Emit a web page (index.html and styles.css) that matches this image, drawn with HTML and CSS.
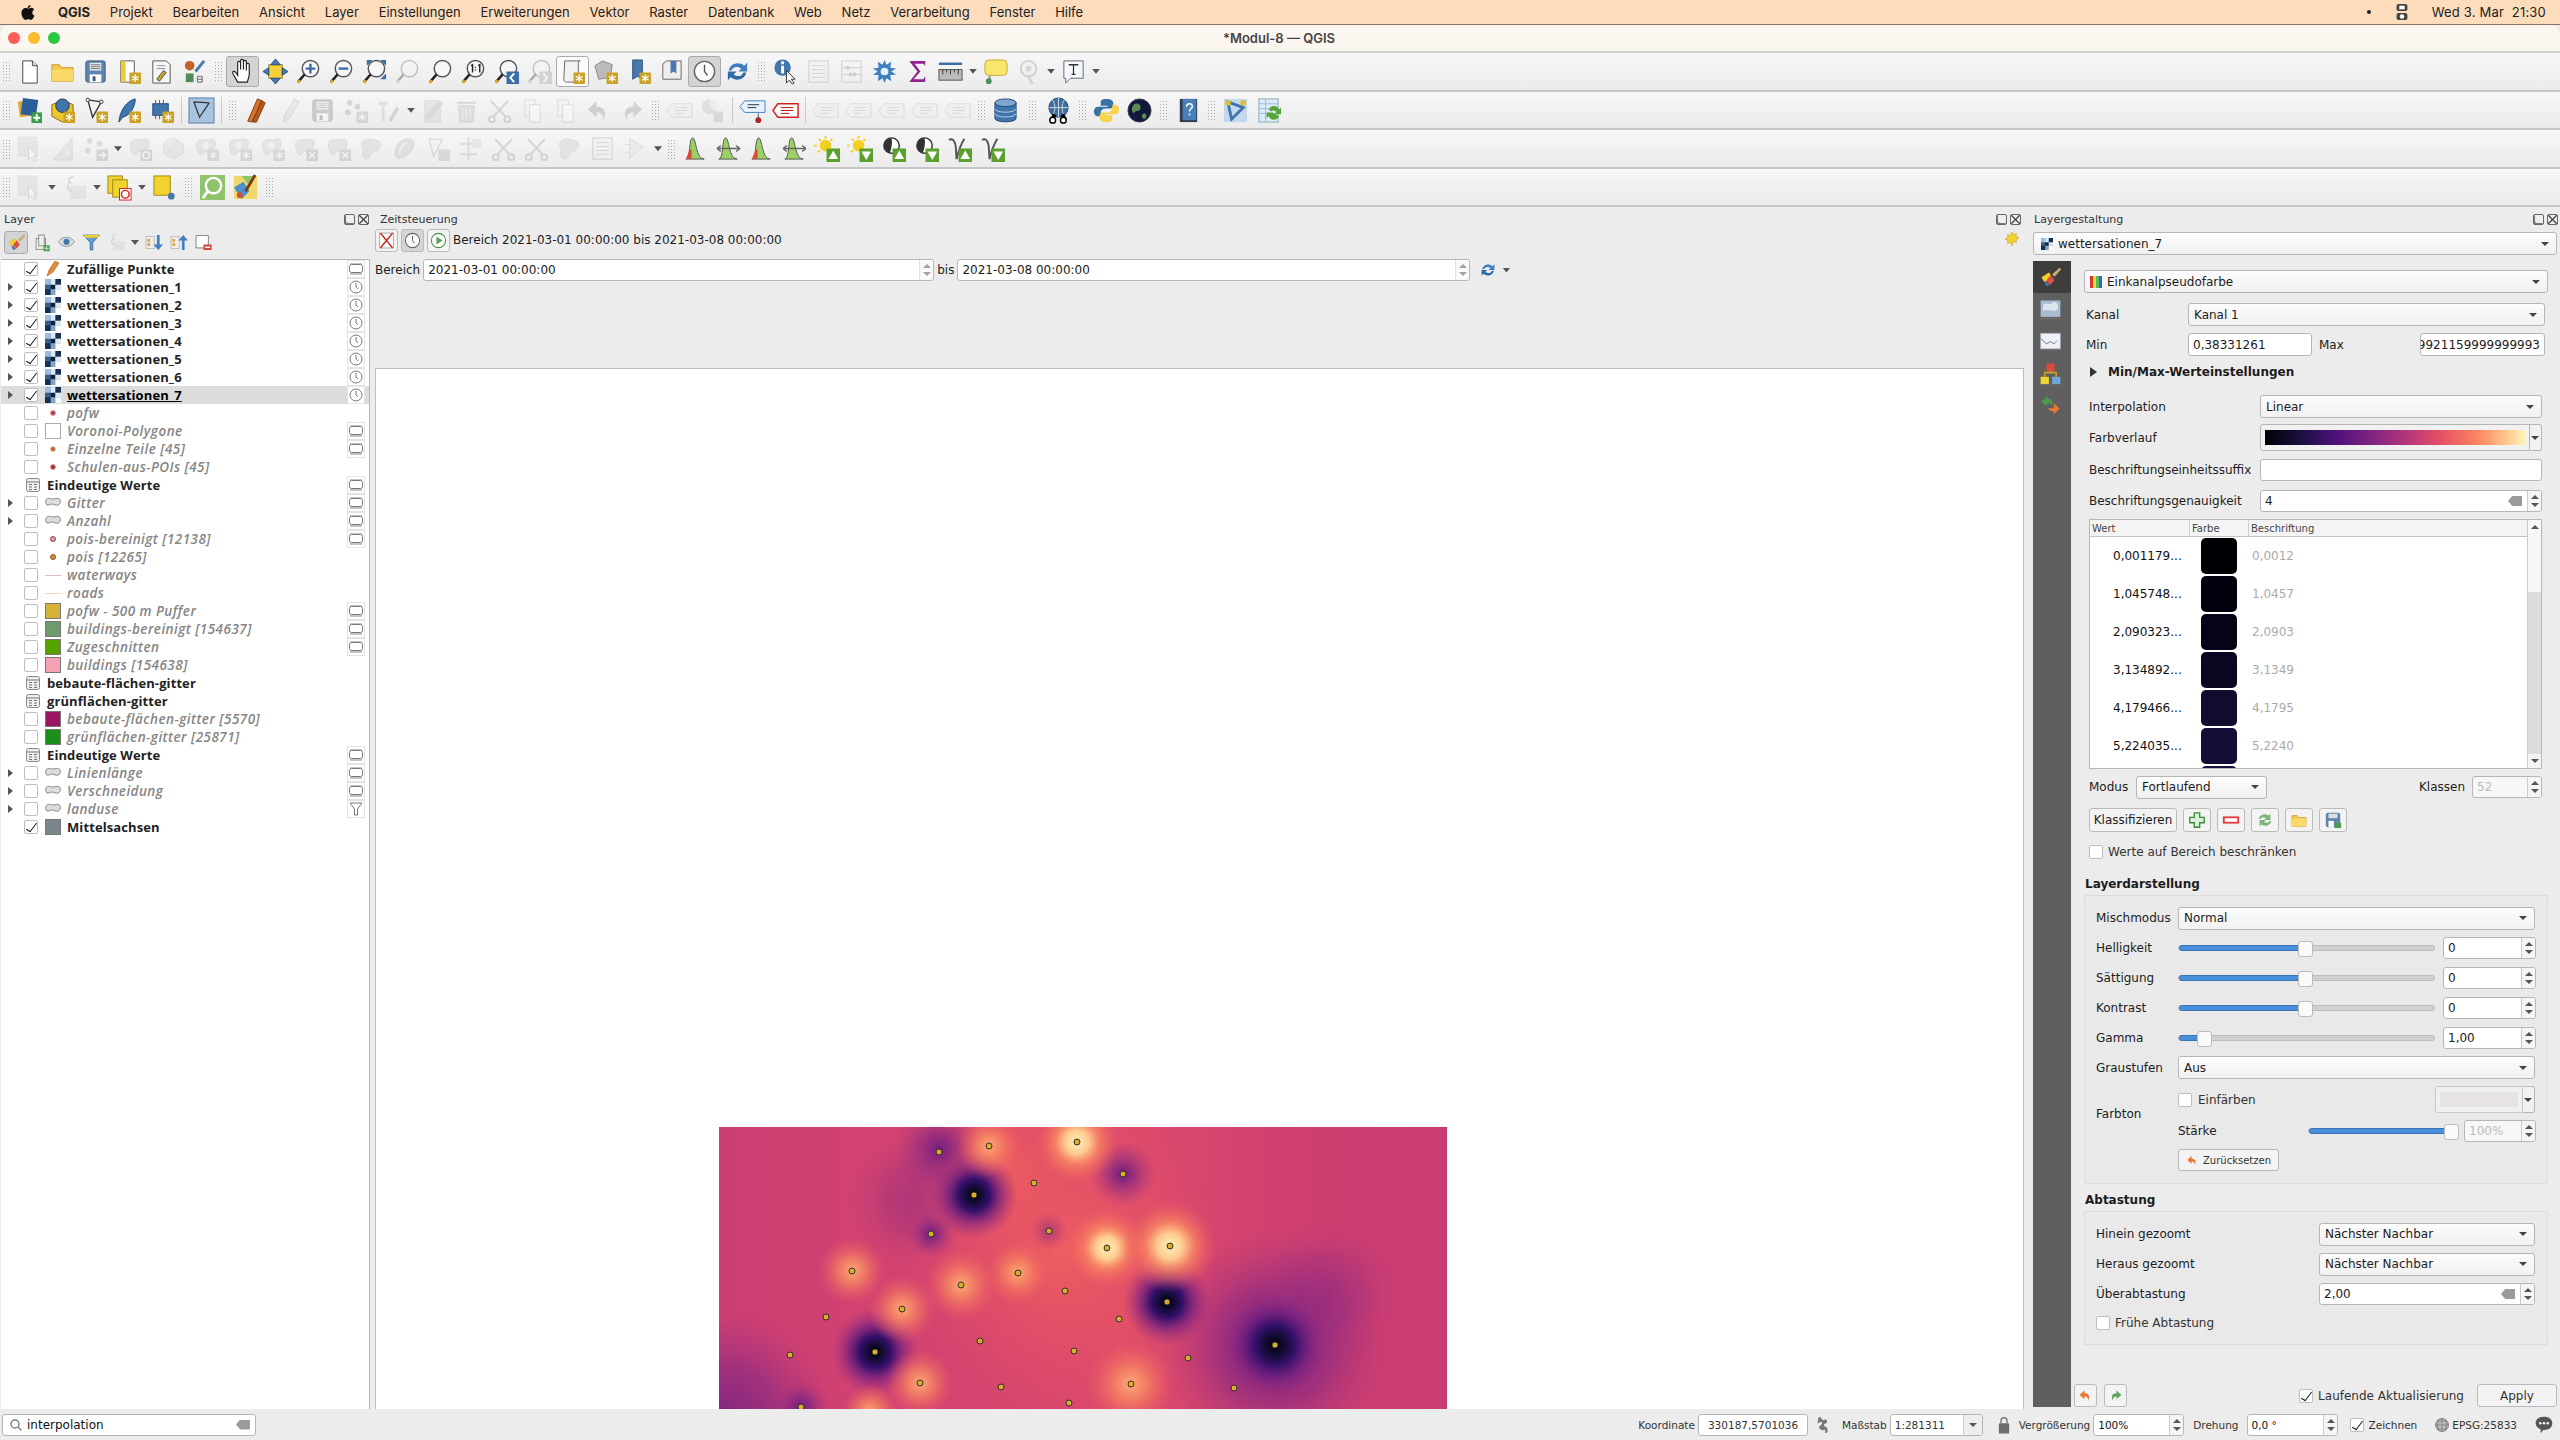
FILE: index.html
```html
<!DOCTYPE html>
<html lang="de">
<head>
  <meta charset="UTF-8" />
  <title>*Modul-8 — QGIS</title>
  <link rel="stylesheet" href="styles.css">
</head>
<body>
  <svg class="defs" width="0" height="0">
    <symbol id="new" viewBox="0 0 28 28"><path d="M7 3h10l5 5v18H7z" fill="#fff" stroke="#444"/><path d="M17 3v5h5" fill="#ddd" stroke="#444"/></symbol>
    <symbol id="folder" viewBox="0 0 28 28"><path d="M3 7h8l2 3h12v14H3z" fill="#f2c94c" stroke="#c79a2b"/><path d="M3 12h22v12H3z" fill="#fbd968"/></symbol>
    <symbol id="save" viewBox="0 0 28 28"><rect x="4" y="3" width="20" height="22" rx="2" fill="#5f84b0" stroke="#38587f"/><rect x="8" y="5" width="12" height="8" fill="#e8e8e8"/><path d="M9 7h10M9 9h10M9 11h10" stroke="#777"/><rect x="8" y="17" width="12" height="8" fill="#fff"/><rect x="11" y="19" width="3" height="5" fill="#38587f"/></symbol>
    <symbol id="star" viewBox="0 0 28 28"><rect x="15" y="15" width="12" height="12" rx="1" fill="#c9a227"/><path d="M21 17v8M17.5 19l7 4M24.5 19l-7 4" stroke="#fff" stroke-width="1.3"/></symbol>
    <symbol id="layout" viewBox="0 0 28 28"><path d="M6 3h14v22H6z" fill="#fff" stroke="#555"/><path d="M6 3h5v22H6z" fill="#f0c83e"/><use href="#star"/></symbol>
    <symbol id="manager" viewBox="0 0 28 28"><path d="M5 3h14l4 4v19H5z" fill="#f6f6f6" stroke="#555"/><path d="M9 8h9M9 11h9" stroke="#88a"/><path d="M9 22l7-9 3 2-7 9z" fill="#c9a227" stroke="#555"/></symbol>
    <symbol id="style" viewBox="0 0 28 28"><circle cx="9" cy="8" r="5" fill="#c4622d"/><path d="M15 14L24 3" stroke="#4a78ad" stroke-width="3"/><rect x="5" y="16" width="8" height="9" fill="#4f8a5a"/><path d="M17 19h5v6h-5zM17 22h5" fill="none" stroke="#666"/></symbol>
    <symbol id="hand" viewBox="0 0 28 28"><path d="M9 25l-5-9c-1-2 1-3 3-1l2 3V5c0-2 3-2 3 0v7V3c0-2 3-2 3 0v9V4c0-2 3-2 3 0v9-6c0-2 3-2 3 0v11l-2 7z" fill="#fff" stroke="#222" stroke-width="1.2"/></symbol>
    <symbol id="pan" viewBox="0 0 28 28"><rect x="7" y="7" width="14" height="14" fill="#f3d23c" stroke="#9a8420"/><path d="M14 1l5 6H9zM14 27l5-6H9zM1 14l6-4v8zM27 14l-6-4v8z" fill="#4a78ad" stroke="#2c5382"/></symbol>
    <symbol id="mag" viewBox="0 0 28 28"><circle cx="16" cy="11" r="8.5" fill="#f4f6f8" stroke="#555" stroke-width="1.5"/><path d="M10 17l-7 8" stroke="#222" stroke-width="2.5"/><path d="M5 23l-2 3" stroke="#e0a91e" stroke-width="3"/></symbol>
    <symbol id="zin" viewBox="0 0 28 28"><use href="#mag"/><path d="M16 6v10M11 11h10" stroke="#3b6ea5" stroke-width="2.5"/></symbol>
    <symbol id="zout" viewBox="0 0 28 28"><use href="#mag"/><path d="M11 11h10" stroke="#3b6ea5" stroke-width="2.5"/></symbol>
    <symbol id="zfull" viewBox="0 0 28 28"><use href="#mag"/><path d="M6 2h6L6 8zM26 2h-6l6 6zM26 22h-6l6-6z" fill="#3b6ea5"/></symbol>
    <symbol id="z11" viewBox="0 0 28 28"><use href="#mag"/><path d="M11.500 8l1.500-1v8M19 8l1.500-1v8M16 9v1M16 12v1" fill="none" stroke="#222" stroke-width="1.500"/></symbol>
    <symbol id="zlast" viewBox="0 0 28 28"><use href="#mag"/><rect x="14" y="14" width="13" height="13" fill="#3b6ea5"/><path d="M22 16l-4 4.5 4 4.5" fill="none" stroke="#fff" stroke-width="2"/></symbol>
    <symbol id="znext" viewBox="0 0 28 28"><use href="#mag"/><rect x="14" y="14" width="13" height="13" fill="#999"/><path d="M18 16l4 4.5-4 4.5" fill="none" stroke="#fff" stroke-width="2"/></symbol>
    <symbol id="map" viewBox="0 0 28 28"><path d="M6 3h16c-2 0-2 2-2 4v18H8c-2 0-3-1-3-3z" fill="#f2f2f2" stroke="#666"/><use href="#star"/></symbol>
    <symbol id="mapstar" viewBox="0 0 28 28"><path d="M3 8l8-5 10 4-2 13-12 2z" fill="#bbb" stroke="#888"/><use href="#star"/></symbol>
    <symbol id="bm" viewBox="0 0 28 28"><path d="M8 2h10v20l-5-3-5 3z" fill="#4a78ad" stroke="#2c5382"/><use href="#star"/></symbol>
    <symbol id="bmshow" viewBox="0 0 28 28"><path d="M5 6l4-3h15v19H5z" fill="#eee" stroke="#666"/><path d="M13 3h6v13l-3-2-3 2z" fill="#4a78ad"/></symbol>
    <symbol id="clock" viewBox="0 0 28 28"><circle cx="14" cy="14" r="10.5" fill="#fbfbfb" stroke="#666" stroke-width="1.5"/><path d="M14 7v7l3 4" fill="none" stroke="#555" stroke-width="1.4"/></symbol>
    <symbol id="refresh" viewBox="0 0 28 28"><path d="M5 13C6 6 15 3 21 8l3-3v9h-9l3-3c-4-3-9-2-10 2z" fill="#3f7fc1"/><path d="M23 15c-1 7-10 10-16 5l-3 3v-9h9l-3 3c4 3 9 2 10-2z" fill="#2f69a8"/></symbol>
    <symbol id="info" viewBox="0 0 28 28"><circle cx="11" cy="10" r="8.5" fill="#3f76ad"/><rect x="9.5" y="8" width="3" height="8" fill="#fff"/><rect x="9.5" y="3.5" width="3" height="3" fill="#fff"/><path d="M15 13v13l3-3 3 4 2-1-3-4h4z" fill="#fff" stroke="#333"/></symbol>
    <symbol id="tbl" viewBox="0 0 28 28"><rect x="4" y="3" width="20" height="22" fill="#f2f2f2" stroke="#888"/><path d="M7 8h14M7 12h14M7 16h14M7 20h14" stroke="#999"/></symbol>
    <symbol id="abacus" viewBox="0 0 28 28"><rect x="4" y="3" width="20" height="22" fill="none" stroke="#888"/><path d="M4 10h20M4 17h20" stroke="#888"/><circle cx="10" cy="10" r="2" fill="#888"/><circle cx="17" cy="17" r="2" fill="#888"/><circle cx="13" cy="17" r="2" fill="#888"/></symbol>
    <symbol id="gear" viewBox="0 0 28 28"><path d="M14 2l2 5 5-3-1 6 6 1-5 3 5 3-6 1 1 6-5-3-2 5-2-5-5 3 1-6-6-1 5-3-5-3 6-1-1-6 5 3z" fill="#3f7fc1"/><circle cx="14" cy="14" r="4" fill="#e8f0f8"/></symbol>
    <symbol id="sigma" viewBox="0 0 28 28"><path d="M6 3h16v5l-2-2H11l6 8-7 8h10l2-3v6H6v-1l8-10-8-10z" fill="#91228f"/></symbol>
    <symbol id="ruler" viewBox="0 0 28 28"><path d="M2 6h24" stroke="#3b6ea5" stroke-width="2.5"/><rect x="2" y="12" width="24" height="11" fill="#bbb" stroke="#555"/><path d="M6 12v5M10 12v3M14 12v5M18 12v3M22 12v5" stroke="#333"/></symbol>
    <symbol id="tip" viewBox="0 0 28 28"><rect x="3" y="2" width="23" height="16" rx="4" fill="#f9e66e" stroke="#c6ad32"/><path d="M8 18v4" stroke="#999" stroke-width="2"/><circle cx="7" cy="24" r="3" fill="#4f8a5a"/></symbol>
    <symbol id="eyemag" viewBox="0 0 28 28"><circle cx="14" cy="11" r="8" fill="#eee" stroke="#888" stroke-width="2"/><circle cx="14" cy="11" r="3" fill="#999"/><path d="M14 19l4 8" stroke="#999" stroke-width="3"/></symbol>
    <symbol id="texta" viewBox="0 0 28 28"><path d="M4 3h20v18H11l-5 5v-5H4z" fill="#f5f8fc" stroke="#667"/><path d="M9 7h10M14 7v10M12 17h4" fill="none" stroke="#333" stroke-width="1.300"/></symbol>
    <symbol id="dsm" viewBox="0 0 28 28"><rect x="3" y="4" width="15" height="16" fill="#e0a52e" transform="rotate(-8 10 12)"/><rect x="6" y="2" width="16" height="17" fill="#2b5d99" transform="rotate(8 14 10)"/><rect x="16" y="16" width="11" height="11" fill="#3f9a4d"/><path d="M21.5 18v7M18 21.500h7" stroke="#fff" stroke-width="2"/></symbol>
    <symbol id="newgeo" viewBox="0 0 28 28"><path d="M3 8l11-5 11 5v12l-11 6-11-6z" fill="#eec62e" stroke="#7b6a12"/><circle cx="14" cy="9" r="7" fill="#3f76ad" stroke="#234"/><use href="#star"/></symbol>
    <symbol id="newv" viewBox="0 0 28 28"><path d="M6 3l5 18L20 5M6 3l14 2" fill="none" stroke="#333" stroke-width="1.4"/><circle cx="6" cy="3" r="1.8" fill="#fff" stroke="#333"/><circle cx="20" cy="5" r="1.8" fill="#fff" stroke="#333"/><use href="#star"/></symbol>
    <symbol id="quill" viewBox="0 0 28 28"><path d="M4 26C5 14 12 4 21 2c0 8-5 17-13 19z" fill="#3f76ad" stroke="#1f4a78"/><use href="#star"/></symbol>
    <symbol id="mem" viewBox="0 0 28 28"><rect x="5" y="7" width="16" height="12" fill="#3f76ad" stroke="#1f4a78"/><path d="M8 3v4M12 3v4M16 3v4M8 19v4M12 19v4M16 19v4" stroke="#555"/><use href="#star"/></symbol>
    <symbol id="virt" viewBox="0 0 28 28"><rect x="1" y="1" width="26" height="26" fill="#a8c4e0" stroke="#5a7ca0"/><path d="M6 5l6 16L22 6M6 5l16 1" fill="none" stroke="#333" stroke-width="1.3"/></symbol>
    <symbol id="pencils" viewBox="0 0 28 28"><path d="M5 25L15 2l5 2-11 22z" fill="#d8742a" stroke="#7c3c12"/><path d="M10 26L19 4l4 2-9 20z" fill="#b65a1e" stroke="#7c3c12"/></symbol>
    <symbol id="pencil" viewBox="0 0 28 28"><path d="M8 26l1-7L19 2l5 3-10 17z" fill="#d4d4d4" stroke="#999"/></symbol>
    <symbol id="nodes" viewBox="0 0 28 28"><circle cx="8" cy="6" r="3" fill="#999"/><circle cx="16" cy="10" r="3" fill="#999"/><circle cx="6" cy="16" r="3" fill="#999"/><use href="#star"/></symbol>
    <symbol id="tools" viewBox="0 0 28 28"><path d="M4 5h9v3l-3 1v16H7V9L4 8z" fill="#bbb"/><path d="M14 24l8-14 3 2-8 14z" fill="#999"/></symbol>
    <symbol id="form" viewBox="0 0 28 28"><path d="M5 4h16v22H5z" fill="#ccc" stroke="#aaa"/><path d="M4 20L20 4l4 3L9 24z" fill="#aaa"/></symbol>
    <symbol id="trash" viewBox="0 0 28 28"><path d="M6 9h16l-1 17H7z" fill="#bbb" stroke="#999"/><path d="M4 6h20" stroke="#999" stroke-width="2"/><path d="M10 12v11M14 12v11M18 12v11" stroke="#eee"/></symbol>
    <symbol id="cut" viewBox="0 0 28 28"><path d="M5 4l16 17M23 4L7 21" stroke="#999" stroke-width="2"/><circle cx="6" cy="23" r="3" fill="none" stroke="#999" stroke-width="2"/><circle cx="22" cy="23" r="3" fill="none" stroke="#999" stroke-width="2"/></symbol>
    <symbol id="copy" viewBox="0 0 28 28"><path d="M6 3h11v17H6z" fill="#f4f4f4" stroke="#aaa"/><path d="M11 8h11v18H11z" fill="#fff" stroke="#aaa"/></symbol>
    <symbol id="undo" viewBox="0 0 28 28"><path d="M12 4L3 13l9 8v-5c5 0 7 2 7 8 4-9 1-14-7-14z" fill="#e8792f"/></symbol>
    <symbol id="redo" viewBox="0 0 28 28"><path d="M16 4l9 9-9 8v-5c-5 0-7 2-7 8-4-9-1-14 7-14z" fill="#5fa463"/></symbol>
    <symbol id="abc" viewBox="0 0 28 28"><path d="M1 14l5-7h21v14H6z" fill="#eee" stroke="#aaa"/><path d="M9 11h13M9 14h13M9 17h9" stroke="#aaa"/></symbol>
    <symbol id="pie" viewBox="0 0 28 28"><circle cx="11" cy="10" r="8" fill="#b8b8b8"/><path d="M11 10V2a8 8 0 0 1 6 13z" fill="#ddd"/><rect x="15" y="15" width="10" height="11" fill="#aaa"/></symbol>
    <symbol id="abcblue" viewBox="0 0 28 28"><path d="M1 10l5-6h21v12H6z" fill="#e8f2fb" stroke="#3f7fc1"/><path d="M9 8h12M9 11h9" stroke="#234"/><path d="M20 17v5" stroke="#555"/><circle cx="20" cy="24" r="3" fill="#a82525"/></symbol>
    <symbol id="abcred" viewBox="0 0 28 28"><path d="M1 14l5-7h21v14H6z" fill="#fff" stroke="#d42020" stroke-width="1.5"/><path d="M9 11h13M9 14h13M9 17h9" stroke="#c01010"/></symbol>
    <symbol id="db" viewBox="0 0 28 28"><path d="M3 6v16c0 5 22 5 22 0V6z" fill="#3f76ad" stroke="#234d78"/><ellipse cx="14" cy="6" rx="11" ry="4" fill="#7ea6cf" stroke="#234d78"/><path d="M3 12c0 5 22 5 22 0M3 17c0 5 22 5 22 0" fill="none" stroke="#bcd"/></symbol>
    <symbol id="globeb" viewBox="0 0 28 28"><circle cx="14" cy="11" r="10" fill="#3f6ea3" stroke="#234d78"/><path d="M4 11h20M14 1v20M8 3c3 5 3 11 0 16M20 3c-3 5-3 11 0 16" stroke="#cdd" fill="none"/><path d="M10 18l-3 6M18 18l3 6" stroke="#000" stroke-width="4"/><circle cx="8" cy="24" r="3" fill="#fff" stroke="#000" stroke-width="1.5"/><circle cx="19" cy="24" r="3" fill="#fff" stroke="#000" stroke-width="1.5"/></symbol>
    <symbol id="python" viewBox="0 0 28 28"><path d="M14 2c-6 0-6 2-6 4v3h7v1H5c-3 0-4 3-4 5s1 5 4 5h3v-3c0-3 2-5 5-5h5c2 0 3-2 3-3V6c0-2-2-4-7-4z" fill="#3873a6"/><path d="M14 26c6 0 6-2 6-4v-3h-7v-1h10c3 0 4-3 4-5s-1-5-4-5h-3v3c0 3-2 5-5 5h-5c-2 0-3 2-3 3v3c0 2 2 4 7 4z" fill="#f7d24b"/></symbol>
    <symbol id="earth" viewBox="0 0 28 28"><circle cx="14" cy="14" r="12" fill="#10183c" stroke="#445"/><path d="M8 8c4-3 8 0 7 4s-5 1-7 5c-3-3-2-7 0-9zM17 18c3-2 5 0 4 3s-6 2-4-3z" fill="#5e8a52"/></symbol>
    <symbol id="help" viewBox="0 0 28 28"><rect x="6" y="2" width="18" height="24" fill="#2f3e52"/><rect x="9" y="2" width="14" height="22" fill="#4b7fb8"/><path d="M13 10c0-4 6-4 6 0 0 2-3 2-3 5M16 17v2" fill="none" stroke="#fff" stroke-width="1.500"/></symbol>
    <symbol id="plug" viewBox="0 0 28 28"><rect x="2" y="2" width="24" height="24" fill="#c4d8ec"/><path d="M6 5l16 6-12 12z" fill="none" stroke="#3f76ad" stroke-width="3"/><circle cx="22" cy="6" r="3" fill="#e0c02e"/><circle cx="6" cy="6" r="3" fill="#e0c02e"/></symbol>
    <symbol id="sync" viewBox="0 0 28 28"><rect x="4" y="2" width="20" height="24" fill="#dcebf7" stroke="#8ab"/><path d="M4 7h20M4 12h20M4 17h20M11 2v24" stroke="#9bd"/><path d="M14 13a6 6 0 0 1 11 0l2-2v7h-7l2-2a3 3 0 0 0-5-1zM25 20a6 6 0 0 1-11 0l-2 2v-6h6z" fill="#58a638"/></symbol>
    <symbol id="hist" viewBox="0 0 28 28"><path d="M4 25C9 25 7 3 11 3s3 22 12 22z" fill="#9bd160" stroke="#555"/><path d="M4 25h6V15H8z" fill="#d94c3b"/></symbol>
    <symbol id="histc" viewBox="0 0 28 28"><path d="M4 25C9 25 7 3 11 3s3 22 12 22z" fill="#9bd160" stroke="#555"/><path d="M2 14h24M2 14l4-3M2 14l4 3M26 14l-4-3M26 14l-4 3" stroke="#666" stroke-width="1.4" fill="none"/></symbol>
    <symbol id="sun" viewBox="0 0 28 28"><circle cx="12" cy="11" r="6" fill="#f2d01e"/><path d="M12 1v3M3 11H0M5 4l2 2M19 4l-2 2M4 18l2-2" stroke="#f2d01e" stroke-width="2"/></symbol>
    <symbol id="contrast" viewBox="0 0 28 28"><circle cx="12" cy="11" r="8" fill="#fff" stroke="#333" stroke-width="1.5"/><path d="M12 3a8 8 0 0 0-8 8c0 4 3 7 6 8 2-5 3-11 2-16z" fill="#333"/></symbol>
    <symbol id="gamma" viewBox="0 0 28 28"><path d="M3 5c4-2 6 1 7 6l1 14M19 4c-3 5-6 12-8 21" fill="none" stroke="#555" stroke-width="2"/></symbol>
    <symbol id="upb" viewBox="0 0 28 28"><rect x="13" y="14" width="14" height="14" fill="#5ba02f"/><path d="M20 16l5 9H15z" fill="#fff"/></symbol>
    <symbol id="downb" viewBox="0 0 28 28"><rect x="13" y="14" width="14" height="14" fill="#5ba02f"/><path d="M20 26l5-9H15z" fill="#fff"/></symbol>
    <symbol id="select" viewBox="0 0 28 28"><rect x="2" y="2" width="20" height="20" fill="#ccc" stroke="#aaa" stroke-dasharray="2 2"/><path d="M13 12v14l3-3 3 4 2-1-3-4h4z" fill="#fff" stroke="#999"/></symbol>
    <symbol id="expr" viewBox="0 0 28 28"><rect x="9" y="12" width="17" height="14" fill="#ccc"/><path d="M13 3c-5 0-7 4-3 6-5 1-4 9 2 8" fill="none" stroke="#aaa" stroke-width="2"/></symbol>
    <symbol id="desel" viewBox="0 0 28 28"><rect x="2" y="2" width="15" height="18" fill="#f1d22e" stroke="#a08a10"/><rect x="7" y="6" width="15" height="18" fill="#f1d22e" stroke="#a08a10"/><rect x="14" y="15" width="12" height="12" fill="#fff" stroke="#d42020"/><circle cx="20" cy="21" r="4" fill="none" stroke="#d42020" stroke-width="1.5"/></symbol>
    <symbol id="yellowpin" viewBox="0 0 28 28"><rect x="3" y="2" width="17" height="20" fill="#f1d22e" stroke="#a08a10"/><circle cx="21" cy="23" r="3.500" fill="#4a78ad"/></symbol>
    <symbol id="greenmag" viewBox="0 0 28 28"><rect x="1" y="1" width="26" height="26" fill="#8fc46b"/><circle cx="15" cy="12" r="8" fill="none" stroke="#fff" stroke-width="2.500"/><path d="M9 18l-5 7" stroke="#fff" stroke-width="3"/></symbol>
    <symbol id="mapstyle" viewBox="0 0 28 28"><rect x="2" y="2" width="24" height="24" fill="#f2d86a"/><path d="M2 14l10-6 6 10-8 8z" fill="#4a8fd0"/><path d="M10 2l6 8 4-3 2-5z" fill="#8fc46b"/><path d="M14 18L24 1" stroke="#7c3c12" stroke-width="3"/><circle cx="8" cy="22" r="3" fill="#d94c3b"/></symbol>
    <symbol id="setsq" viewBox="0 0 28 28"><path d="M4 26L24 3v23z" fill="#ccc" stroke="#aaa"/><path d="M16 21l4-5v5z" fill="#eee"/></symbol>
    <symbol id="ptarrow" viewBox="0 0 28 28"><circle cx="8" cy="6" r="3" fill="#aaa"/><circle cx="18" cy="9" r="3" fill="#aaa"/><circle cx="6" cy="16" r="3" fill="#aaa"/><rect x="15" y="15" width="12" height="12" fill="#999"/><path d="M17 21h7M21 18l3 3-3 3" fill="none" stroke="#fff" stroke-width="1.500"/></symbol>
    <symbol id="blobr" viewBox="0 0 28 28"><path d="M4 8c3-5 8-2 11-3s8-2 8 3-2 7-5 8-5 0-7 3-5 2-6-2-2-6-1-9z" fill="#c8c8c8" stroke="#aaa"/><rect x="14" y="15" width="12" height="12" fill="#999"/><circle cx="20" cy="21" r="3.500" fill="none" stroke="#fff" stroke-width="1.500"/></symbol>
    <symbol id="blobs" viewBox="0 0 28 28"><path d="M4 8c3-5 8-2 11-3s8-2 8 3-2 7-5 8-5 0-7 3-5 2-6-2-2-6-1-9z" fill="#c8c8c8" stroke="#aaa"/><circle cx="13" cy="11" r="3.500" fill="#eee"/><use href="#star"/></symbol>
    <symbol id="blobx" viewBox="0 0 28 28"><path d="M4 8c3-5 8-2 11-3s8-2 8 3-2 7-5 8-5 0-7 3-5 2-6-2-2-6-1-9z" fill="#c8c8c8" stroke="#aaa"/><rect x="15" y="15" width="12" height="12" fill="#999"/><path d="M18 18l6 6M24 18l-6 6" stroke="#fff" stroke-width="1.500"/></symbol>
    <symbol id="blobp" viewBox="0 0 28 28"><path d="M4 8c3-5 9-4 13-3s8 2 6 7-5 5-8 6-1 7-6 7-4-5-4-9-2-5-1-8z" fill="#c4c4c4" stroke="#aaa"/></symbol>
    <symbol id="hexa" viewBox="0 0 28 28"><path d="M14 3l10 6v10l-10 6-10-6V9z" fill="#ccc" stroke="#aaa"/><path d="M9 3c4 0 6 3 4 7s-7 2-7-2 1-5 3-5z" fill="#ddd"/></symbol>
    <symbol id="leaf" viewBox="0 0 28 28"><path d="M5 22c-3-6 3-17 12-18s8 9 3 14-12 9-15 4z" fill="#bbb" stroke="#999"/><path d="M9 20c-1-5 3-11 8-12" fill="none" stroke="#e6e6e6" stroke-width="2"/></symbol>
    <symbol id="vsplit" viewBox="0 0 28 28"><path d="M5 4l5 18 9-17M5 4l14 1" fill="none" stroke="#aaa" stroke-width="1.500"/><rect x="15" y="15" width="12" height="12" fill="#aaa"/></symbol>
    <symbol id="vcut" viewBox="0 0 28 28"><path d="M12 2v24M3 9h18M3 20h18" stroke="#aaa" stroke-width="2" fill="none"/><rect x="16" y="4" width="9" height="9" fill="#ccc"/></symbol>
    <symbol id="vecrot" viewBox="0 0 28 28"><path d="M8 4l14 8-14 12z" fill="#ddd" stroke="#aaa"/><path d="M8 10h-5M8 18H3" stroke="#aaa"/></symbol>

    <symbol id="chip" viewBox="0 0 16 16"><rect x="1.500" y="3.500" width="13" height="8" rx="2" fill="#fff" stroke="#777"/><path d="M3 12v2M5 12v2M7 12v2M9 12v2M11 12v2M13 12v2M3 2v1.500M5 2v1.500M7 2v1.500M9 2v1.500M11 2v1.500M13 2v1.500" stroke="#888"/></symbol>
    <symbol id="clk" viewBox="0 0 16 16"><circle cx="8" cy="8" r="6" fill="#fff" stroke="#777"/><path d="M8 4v4l2 2" fill="none" stroke="#777"/></symbol>
    <symbol id="filt" viewBox="0 0 16 16"><path d="M2 2h12L9.500 8v6h-3V8z" fill="#fff" stroke="#777"/></symbol>
    <symbol id="ras" viewBox="0 0 14 14"><rect width="14" height="14" fill="#3a5f8f"/><rect x="0" y="0" width="5" height="5" fill="#9dbde0"/><rect x="9" y="0" width="5" height="5" fill="#17304f"/><rect x="5" y="5" width="4" height="4" fill="#0e2038"/><rect x="5" y="0" width="4" height="5" fill="#dde8f3"/><rect x="9" y="5" width="5" height="4" fill="#dde8f3"/><rect x="0" y="9" width="5" height="5" fill="#17304f"/><rect x="5" y="9" width="4" height="5" fill="#7fa3c9"/><rect x="9" y="9" width="5" height="5" fill="#fff"/></symbol>
    <symbol id="blob" viewBox="0 0 16 14"><path d="M1 4c2-3 5-1 7-1s6-2 7 1 0 4-2 5-4-1-6-1-4 2-5 1-2-3-1-5z" fill="#ddd" stroke="#888"/></symbol>
    <symbol id="grp" viewBox="0 0 14 14"><rect x=".5" y=".5" width="13" height="13" rx="2" fill="#eee" stroke="#888"/><path d="M1 4h12M3 6.500h3M8 6.500h3M3 9h3M8 9h3M3 11.500h3M8 11.500h3" stroke="#777"/></symbol>
    <symbol id="pen" viewBox="0 0 16 16"><path d="M2 15l2-6L10 0l4 2-6 9z" fill="#e08b3a" stroke="#a85f1a" stroke-width=".6"/></symbol>
    <symbol id="ramp" viewBox="0 0 12 12"><rect width="3" height="12" fill="#d33"/><rect x="3" width="3" height="12" fill="#ed3"/><rect x="6" width="3" height="12" fill="#5b5"/><rect x="9" width="3" height="12" fill="#36c"/></symbol>
    <symbol id="brush" viewBox="0 0 28 28"><path d="M3 14l9-6 7 9-5 6z" fill="#d9513f"/><path d="M7 20l-4-6 9-6 2 3z" fill="#f1d22e"/><path d="M6 18l8 5-5 2z" fill="#3f76ad"/><path d="M16 10l9-8 2 2-8 9z" fill="#c9ae6a"/></symbol>
    <symbol id="eye" viewBox="0 0 28 28"><path d="M2 13c6-9 18-9 24 0-6 9-18 9-24 0z" fill="#ddd" stroke="#777"/><circle cx="14" cy="13" r="4.500" fill="#3f76ad"/></symbol>
    <symbol id="funnel" viewBox="0 0 28 28"><path d="M2 3h24L16 14v11h-4V14z" fill="#5ea0d8" stroke="#2c5382"/><path d="M2 3h24l-3 4H5z" fill="#f1d22e"/></symbol>
    <symbol id="addgrp" viewBox="0 0 28 28"><rect x="6" y="8" width="14" height="16" fill="#eee" stroke="#666"/><rect x="10" y="3" width="8" height="16" fill="#eee" stroke="#666"/><rect x="17" y="18" width="9" height="9" fill="#4e9a4e"/><path d="M21.500 19v7M18 22.500h7" stroke="#fff"/></symbol>
    <symbol id="exp" viewBox="0 0 28 28"><rect x="3" y="5" width="12" height="18" fill="#eee" stroke="#aaa"/><rect x="5" y="9" width="4" height="4" fill="#e0a52e"/><rect x="5" y="15" width="4" height="4" fill="#e0a52e"/><path d="M19 3v14h-5l7 8 7-8h-5V3z" fill="#3f7fc1"/></symbol>
    <symbol id="col" viewBox="0 0 28 28"><rect x="3" y="5" width="12" height="18" fill="#eee" stroke="#aaa"/><rect x="5" y="9" width="4" height="4" fill="#e0a52e"/><rect x="5" y="15" width="4" height="4" fill="#e0a52e"/><path d="M19 25V11h-5l7-8 7 8h-5v14z" fill="#3f7fc1"/></symbol>
    <symbol id="rem" viewBox="0 0 28 28"><rect x="3" y="4" width="18" height="18" fill="#fff" stroke="#555"/><rect x="14" y="17" width="12" height="8" fill="#d94040"/><rect x="16" y="20" width="8" height="2" fill="#fff"/></symbol>
    <symbol id="cross" viewBox="0 0 28 28"><rect x="4" y="3" width="20" height="22" fill="#fff" stroke="#888"/><path d="M5 3l18 22M23 3L5 25" stroke="#d42020" stroke-width="2"/></symbol>
    <symbol id="play" viewBox="0 0 28 28"><circle cx="14" cy="14" r="10.500" fill="#fff" stroke="#4d8a4d" stroke-width="1.500"/><path d="M11 8l9 6-9 6z" fill="#5ba05b"/></symbol>
    <symbol id="plus" viewBox="0 0 20 20"><path d="M7 2h6v5h5v6h-5v5H7v-5H2V7h5z" fill="#d9efd9" stroke="#3d8a3d" stroke-width="1.500"/></symbol>
    <symbol id="minus" viewBox="0 0 20 20"><rect x="2" y="7" width="16" height="6" fill="#fff" stroke="#e03c3c" stroke-width="2"/></symbol>
    <symbol id="grcy" viewBox="0 0 20 20"><path d="M3 9c1-5 7-7 11-4l2-2v7h-7l2-2c-3-2-5-1-6 1zM17 11c-1 5-7 7-11 4l-2 2v-7h7l-2 2c3 2 5 1 6-1z" fill="#7ab87a"/></symbol>
    <symbol id="saveg" viewBox="0 0 20 20"><rect x="2" y="2" width="16" height="16" rx="2" fill="#5f84b0"/><rect x="5" y="3" width="10" height="5" fill="#ddd"/><rect x="5" y="11" width="6" height="7" fill="#fff"/><rect x="12" y="13" width="7" height="6" fill="#4e9a4e"/></symbol>
    <symbol id="greyglobe" viewBox="0 0 20 20"><circle cx="10" cy="10" r="8" fill="#bbb" stroke="#666"/><path d="M2 10h16M10 2v16M4 5h12M4 15h12M6 3c-2 5-2 9 0 14M14 3c2 5 2 9 0 14" fill="none" stroke="#666" stroke-width=".7"/></symbol>
    <symbol id="msg" viewBox="0 0 24 24"><path d="M12 2c6 0 10 3 10 8s-4 8-10 8h-1l-3 4v-5C4 16 2 13 2 10c0-5 4-8 10-8z" fill="#555"/><circle cx="7.500" cy="10" r="1.500" fill="#fff"/><circle cx="12" cy="10" r="1.500" fill="#fff"/><circle cx="16.500" cy="10" r="1.500" fill="#fff"/></symbol>
    <symbol id="lock" viewBox="0 0 14 22"><rect x="1" y="9" width="12" height="12" rx="1" fill="#6e6e6e"/><path d="M3.500 9V6a3.500 3.500 0 0 1 7 0v3" fill="none" stroke="#777" stroke-width="1.600"/></symbol>
    <symbol id="apple" viewBox="0 0 16 18"><path d="M11 1c0 2-2 4-3.500 3.500C7.500 3 9 1 11 1zM8 5c1 0 2-1 4-1 1 0 2.500.5 3 2-3 2-2.500 6 .5 7-1 2.500-2.500 5-4 5-1 0-1.500-.7-3-.7s-2 .7-3 .7C3 18 .5 13.500.5 10 .5 6.500 3 4.500 5 4.500 6.500 4.500 7.200 5 8 5z" fill="#111"/></symbol>
    <symbol id="ctrl" viewBox="0 0 14 20"><rect x="1" y="1" width="12" height="8" rx="2" fill="#444"/><rect x="4" y="3" width="6" height="4" fill="#fff"/><rect x="1" y="11" width="12" height="8" rx="2" fill="#444"/><circle cx="7" cy="15" r="2.500" fill="#fff"/></symbol>
    <symbol id="plugmini" viewBox="0 0 16 20"><path d="M5 2c-4 1 0 3-3 6 2 1 5-3 5 0s-5 3-2 6 4-1 5 1-1 3 1 3 2-3 1-5-3-1-3-3 3-1 3-3-1-3-3-2-3-3-4-3z" fill="#777"/></symbol>
    <symbol id="sumgear" viewBox="0 0 16 16"><path d="M8 1l1.500 2.500 3-1-.5 3 3 1.500-3 1.500.5 3-3-1L8 15l-1.500-3.500-3 1 .5-3L1 8l3-1.500-.5-3 3 1z" fill="#f1d22e" stroke="#c9a227" stroke-width=".6"/></symbol>
    <symbol id="netw" viewBox="0 0 28 28"><rect x="2" y="3" width="24" height="20" fill="#a8bcd2"/><path d="M5 8c4-3 8 1 11-2s6 0 7 2v6c-6 4-14-2-18 2z" fill="#dce6ef"/><path d="M2 25h24" stroke="#777" stroke-dasharray="2 1" stroke-width="2"/></symbol>
    <symbol id="histo" viewBox="0 0 28 28"><rect x="2" y="4" width="24" height="19" fill="#eef1f5" stroke="#aab"/><path d="M2 10l7 7 5-3 4 3 4-4" fill="none" stroke="#567"/></symbol>
    <symbol id="tree" viewBox="0 0 28 28"><rect x="9" y="2" width="10" height="9" fill="#d94c3b"/><rect x="2" y="18" width="10" height="9" fill="#f1d22e"/><rect x="16" y="18" width="10" height="9" fill="#6ea6da"/><path d="M7 18v-5h14v5M14 11v2" fill="none" stroke="#c9a227" stroke-width="2"/></symbol>
    <symbol id="undored" viewBox="0 0 28 28"><path d="M11 2L3 9l7 6v-4c4 0 6 1 6 4 2-6 0-9-6-9z" fill="#4e9a4e"/><path d="M18 11l7 7-7 7v-4c-4 0-6-1-7-4 4 1 5 0 7 0z" fill="#e8792f"/></symbol>
  </svg>

  <header class="menubar">
    <svg class="apple"><use href="#apple"/></svg>
    <span class="menu app">QGIS</span><span class="menu">Projekt</span><span class="menu">Bearbeiten</span><span class="menu">Ansicht</span><span class="menu">Layer</span><span class="menu">Einstellungen</span><span class="menu">Erweiterungen</span><span class="menu">Vektor</span><span class="menu">Raster</span><span class="menu">Datenbank</span><span class="menu">Web</span><span class="menu">Netz</span><span class="menu">Verarbeitung</span><span class="menu">Fenster</span><span class="menu">Hilfe</span>
    <span class="menu-right">
      <span class="dot"></span>
      <svg class="ctrl"><use href="#ctrl"/></svg>
      <span class="clock">Wed 3. Mar&nbsp; 21:30</span>
    </span>
  </header>

  <div class="titlebar">
    <span class="light red"></span><span class="light amber"></span><span class="light green"></span>
    <span class="title">*Modul-8 — QGIS</span>
  </div>

  <div class="toolbar">
    <span class="grip"></span>
    <span class="tb"><svg><use href="#new"/></svg></span><span class="tb"><svg><use href="#folder"/></svg></span><span class="tb"><svg><use href="#save"/></svg></span><span class="tb"><svg><use href="#layout"/></svg></span><span class="tb"><svg><use href="#manager"/></svg></span><span class="tb"><svg><use href="#style"/></svg></span>
    <span class="grip"></span>
    <span class="tb on"><svg><use href="#hand"/></svg></span><span class="tb"><svg><use href="#pan"/></svg></span><span class="tb"><svg><use href="#zin"/></svg></span><span class="tb"><svg><use href="#zout"/></svg></span><span class="tb"><svg><use href="#zfull"/></svg></span><span class="tb off"><svg><use href="#mag"/></svg></span><span class="tb"><svg><use href="#mag"/></svg></span><span class="tb"><svg><use href="#z11"/></svg></span><span class="tb"><svg><use href="#zlast"/></svg></span><span class="tb off"><svg><use href="#znext"/></svg></span><span class="tb ring"><svg><use href="#map"/></svg></span><span class="tb"><svg><use href="#mapstar"/></svg></span><span class="tb"><svg><use href="#bm"/></svg></span><span class="tb"><svg><use href="#bmshow"/></svg></span><span class="tb on"><svg><use href="#clock"/></svg></span><span class="tb"><svg><use href="#refresh"/></svg></span>
    <span class="grip"></span>
    <span class="tb"><svg><use href="#info"/></svg></span><span class="tb off"><svg><use href="#tbl"/></svg></span><span class="tb off"><svg><use href="#abacus"/></svg></span><span class="tb"><svg><use href="#gear"/></svg></span><span class="tb"><svg><use href="#sigma"/></svg></span><span class="tb"><svg><use href="#ruler"/></svg></span><span class="arr"></span><span class="tb"><svg><use href="#tip"/></svg></span><span class="tb off"><svg><use href="#eyemag"/></svg></span><span class="arr"></span><span class="tb"><svg><use href="#texta"/></svg></span><span class="arr"></span>
  </div>

  <div class="toolbar">
    <span class="grip"></span>
    <span class="tb"><svg><use href="#dsm"/></svg></span><span class="tb"><svg><use href="#newgeo"/></svg></span><span class="tb"><svg><use href="#newv"/></svg></span><span class="tb"><svg><use href="#quill"/></svg></span><span class="tb"><svg><use href="#mem"/></svg></span><span class="sep"></span><span class="tb"><svg><use href="#virt"/></svg></span><span class="sep"></span>
    <span class="grip"></span>
    <span class="tb"><svg><use href="#pencils"/></svg></span><span class="tb off"><svg><use href="#pencil"/></svg></span><span class="tb off"><svg><use href="#save"/></svg></span><span class="tb off"><svg><use href="#nodes"/></svg></span><span class="tb off"><svg><use href="#tools"/></svg></span><span class="arr"></span><span class="tb off"><svg><use href="#form"/></svg></span><span class="tb off"><svg><use href="#trash"/></svg></span><span class="tb off"><svg><use href="#cut"/></svg></span><span class="tb off"><svg><use href="#copy"/></svg></span><span class="tb off"><svg><use href="#copy"/></svg></span><span class="tb off"><svg><use href="#undo"/></svg></span><span class="tb off"><svg><use href="#redo"/></svg></span>
    <span class="grip"></span>
    <span class="tb off"><svg><use href="#abc"/></svg></span><span class="tb off"><svg><use href="#pie"/></svg></span><span class="sep"></span><span class="tb"><svg><use href="#abcblue"/></svg></span><span class="tb"><svg><use href="#abcred"/></svg></span><span class="sep"></span><span class="tb off"><svg><use href="#abc"/></svg></span><span class="tb off"><svg><use href="#abc"/></svg></span><span class="tb off"><svg><use href="#abc"/></svg></span><span class="tb off"><svg><use href="#abc"/></svg></span><span class="tb off"><svg><use href="#abc"/></svg></span>
    <span class="grip"></span>
    <span class="tb"><svg><use href="#db"/></svg></span>
    <span class="grip wide"></span>
    <span class="tb"><svg><use href="#globeb"/></svg></span>
    <span class="grip"></span>
    <span class="tb"><svg><use href="#python"/></svg></span><span class="tb"><svg><use href="#earth"/></svg></span>
    <span class="grip"></span>
    <span class="tb"><svg><use href="#help"/></svg></span>
    <span class="grip"></span>
    <span class="tb"><svg><use href="#plug"/></svg></span><span class="tb"><svg><use href="#sync"/></svg></span>
  </div>

  <div class="toolbar">
    <span class="grip"></span>
    <span class="tb off"><svg><use href="#select"/></svg></span><span class="tb off"><svg><use href="#setsq"/></svg></span><span class="tb off"><svg><use href="#ptarrow"/></svg></span><span class="arr"></span><span class="tb off"><svg><use href="#blobr"/></svg></span><span class="tb off"><svg><use href="#hexa"/></svg></span><span class="tb off"><svg><use href="#blobs"/></svg></span><span class="tb off"><svg><use href="#blobs"/></svg></span><span class="tb off"><svg><use href="#blobs"/></svg></span><span class="tb off"><svg><use href="#blobx"/></svg></span><span class="tb off"><svg><use href="#blobx"/></svg></span><span class="tb off"><svg><use href="#blobp"/></svg></span><span class="tb off"><svg><use href="#leaf"/></svg></span><span class="tb off"><svg><use href="#vsplit"/></svg></span><span class="tb off"><svg><use href="#vcut"/></svg></span><span class="tb off"><svg><use href="#cut"/></svg></span><span class="tb off"><svg><use href="#cut"/></svg></span><span class="tb off"><svg><use href="#blobp"/></svg></span><span class="tb off"><svg><use href="#tbl"/></svg></span><span class="tb off"><svg><use href="#vecrot"/></svg></span><span class="arr"></span>
    <span class="grip"></span>
    <span class="tb"><svg><use href="#hist"/></svg></span><span class="tb"><svg><use href="#histc"/></svg></span><span class="tb"><svg><use href="#hist"/></svg></span><span class="tb"><svg><use href="#histc"/></svg></span><span class="tb"><svg><use href="#sun"/><use href="#upb"/></svg></span><span class="tb"><svg><use href="#sun"/><use href="#downb"/></svg></span><span class="tb"><svg><use href="#contrast"/><use href="#upb"/></svg></span><span class="tb"><svg><use href="#contrast"/><use href="#downb"/></svg></span><span class="tb"><svg><use href="#gamma"/><use href="#upb"/></svg></span><span class="tb"><svg><use href="#gamma"/><use href="#downb"/></svg></span>
  </div>

  <div class="toolbar">
    <span class="grip"></span>
    <span class="tb off"><svg><use href="#select"/></svg></span><span class="arr"></span><span class="tb off"><svg><use href="#expr"/></svg></span><span class="arr"></span><span class="tb"><svg><use href="#desel"/></svg></span><span class="arr"></span><span class="tb"><svg><use href="#yellowpin"/></svg></span>
    <span class="grip"></span>
    <span class="tb"><svg><use href="#greenmag"/></svg></span><span class="tb"><svg><use href="#mapstyle"/></svg></span>
    <span class="grip"></span>
  </div>

  <main class="workspace">
    <section class="layers">
      <div class="dock-title"><span>Layer</span><span class="dock-btns"><i class="db-float"></i><i class="db-close"></i></span></div>
      <div class="layer-tools">
        <span class="lt on"><svg><use href="#brush"/></svg></span><span class="lt"><svg><use href="#addgrp"/></svg></span><span class="lt"><svg><use href="#eye"/></svg></span><span class="lt"><svg><use href="#funnel"/></svg></span><span class="lt off"><svg><use href="#expr"/></svg></span><span class="arr small"></span><span class="lt"><svg><use href="#exp"/></svg></span><span class="lt"><svg><use href="#col"/></svg></span><span class="lt"><svg><use href="#rem"/></svg></span>
      </div>
      <div class="tree">
        <div class="row"><b class="tw"></b><i class="cb on"></i><svg class="sym"><use href="#pen"/></svg><span class="nm strong">Zufällige Punkte</span><svg class="ind"><use href="#chip"/></svg></div>
        <div class="row"><b class="tw c"></b><i class="cb on"></i><svg class="sym"><use href="#ras"/></svg><span class="nm strong">wettersationen_1</span><svg class="ind"><use href="#clk"/></svg></div>
        <div class="row"><b class="tw c"></b><i class="cb on"></i><svg class="sym"><use href="#ras"/></svg><span class="nm strong">wettersationen_2</span><svg class="ind"><use href="#clk"/></svg></div>
        <div class="row"><b class="tw c"></b><i class="cb on"></i><svg class="sym"><use href="#ras"/></svg><span class="nm strong">wettersationen_3</span><svg class="ind"><use href="#clk"/></svg></div>
        <div class="row"><b class="tw c"></b><i class="cb on"></i><svg class="sym"><use href="#ras"/></svg><span class="nm strong">wettersationen_4</span><svg class="ind"><use href="#clk"/></svg></div>
        <div class="row"><b class="tw c"></b><i class="cb on"></i><svg class="sym"><use href="#ras"/></svg><span class="nm strong">wettersationen_5</span><svg class="ind"><use href="#clk"/></svg></div>
        <div class="row"><b class="tw c"></b><i class="cb on"></i><svg class="sym"><use href="#ras"/></svg><span class="nm strong">wettersationen_6</span><svg class="ind"><use href="#clk"/></svg></div>
        <div class="row sel"><b class="tw c"></b><i class="cb on"></i><svg class="sym"><use href="#ras"/></svg><span class="nm strong cur">wettersationen_7</span><svg class="ind"><use href="#clk"/></svg></div>
        <div class="row"><b class="tw"></b><i class="cb"></i><span class="sym"><i class="pt pt-a"></i></span><span class="nm">pofw</span></div>
        <div class="row"><b class="tw"></b><i class="cb"></i><span class="sym"><i class="fill f-none"></i></span><span class="nm">Voronoi-Polygone</span><svg class="ind"><use href="#chip"/></svg></div>
        <div class="row"><b class="tw"></b><i class="cb"></i><span class="sym"><i class="pt pt-b"></i></span><span class="nm">Einzelne Teile [45]</span><svg class="ind"><use href="#chip"/></svg></div>
        <div class="row"><b class="tw"></b><i class="cb"></i><span class="sym"><i class="pt pt-c"></i></span><span class="nm">Schulen-aus-POIs [45]</span></div>
        <div class="row"><b class="tw"></b><svg class="grp"><use href="#grp"/></svg><span class="nm strong">Eindeutige Werte</span><svg class="ind"><use href="#chip"/></svg></div>
        <div class="row"><b class="tw c"></b><i class="cb"></i><svg class="sym"><use href="#blob"/></svg><span class="nm">Gitter</span><svg class="ind"><use href="#chip"/></svg></div>
        <div class="row"><b class="tw c"></b><i class="cb"></i><svg class="sym"><use href="#blob"/></svg><span class="nm">Anzahl</span><svg class="ind"><use href="#chip"/></svg></div>
        <div class="row"><b class="tw"></b><i class="cb"></i><span class="sym"><i class="pt pt-d"></i></span><span class="nm">pois-bereinigt [12138]</span><svg class="ind"><use href="#chip"/></svg></div>
        <div class="row"><b class="tw"></b><i class="cb"></i><span class="sym"><i class="pt pt-e"></i></span><span class="nm">pois [12265]</span></div>
        <div class="row"><b class="tw"></b><i class="cb"></i><span class="sym"><i class="ln ln-a"></i></span><span class="nm">waterways</span></div>
        <div class="row"><b class="tw"></b><i class="cb"></i><span class="sym"><i class="ln ln-b"></i></span><span class="nm">roads</span></div>
        <div class="row"><b class="tw"></b><i class="cb"></i><span class="sym"><i class="fill f-gold"></i></span><span class="nm">pofw - 500 m Puffer</span><svg class="ind"><use href="#chip"/></svg></div>
        <div class="row"><b class="tw"></b><i class="cb"></i><span class="sym"><i class="fill f-sage"></i></span><span class="nm">buildings-bereinigt [154637]</span><svg class="ind"><use href="#chip"/></svg></div>
        <div class="row"><b class="tw"></b><i class="cb"></i><span class="sym"><i class="fill f-green"></i></span><span class="nm">Zugeschnitten</span><svg class="ind"><use href="#chip"/></svg></div>
        <div class="row"><b class="tw"></b><i class="cb"></i><span class="sym"><i class="fill f-pink"></i></span><span class="nm">buildings [154638]</span></div>
        <div class="row"><b class="tw"></b><svg class="grp"><use href="#grp"/></svg><span class="nm strong">bebaute-flächen-gitter</span></div>
        <div class="row"><b class="tw"></b><svg class="grp"><use href="#grp"/></svg><span class="nm strong">grünflächen-gitter</span></div>
        <div class="row"><b class="tw"></b><i class="cb"></i><span class="sym"><i class="fill f-plum"></i></span><span class="nm">bebaute-flächen-gitter [5570]</span></div>
        <div class="row"><b class="tw"></b><i class="cb"></i><span class="sym"><i class="fill f-leaf"></i></span><span class="nm">grünflächen-gitter [25871]</span></div>
        <div class="row"><b class="tw"></b><svg class="grp"><use href="#grp"/></svg><span class="nm strong">Eindeutige Werte</span><svg class="ind"><use href="#chip"/></svg></div>
        <div class="row"><b class="tw c"></b><i class="cb"></i><svg class="sym"><use href="#blob"/></svg><span class="nm">Linienlänge</span><svg class="ind"><use href="#chip"/></svg></div>
        <div class="row"><b class="tw c"></b><i class="cb"></i><svg class="sym"><use href="#blob"/></svg><span class="nm">Verschneidung</span><svg class="ind"><use href="#chip"/></svg></div>
        <div class="row"><b class="tw c"></b><i class="cb"></i><svg class="sym"><use href="#blob"/></svg><span class="nm">landuse</span><svg class="ind"><use href="#filt"/></svg></div>
        <div class="row"><b class="tw"></b><i class="cb on"></i><span class="sym"><i class="fill f-slate"></i></span><span class="nm strong">Mittelsachsen</span></div>
      </div>
    </section>

    <section class="center">
      <div class="dock-title time-title"><span>Zeitsteuerung</span><span class="dock-btns"><i class="db-float"></i><i class="db-close"></i></span></div>
      <div class="time-row">
        <span class="tc"><svg><use href="#cross"/></svg></span><span class="tc on"><svg><use href="#clock"/></svg></span><span class="tc"><svg><use href="#play"/></svg></span>
        <span class="time-text">Bereich 2021-03-01 00:00:00 bis 2021-03-08 00:00:00</span>
        <svg class="time-gear"><use href="#sumgear"/></svg>
      </div>
      <div class="range-row">
        <span>Bereich</span>
        <span class="field range"><span class="val">2021-03-01 00:00:00</span><i class="spin faint"></i></span>
        <span>bis</span>
        <span class="field range two"><span class="val">2021-03-08 00:00:00</span><i class="spin faint"></i></span>
        <svg class="range-sync"><use href="#refresh"/></svg><span class="arr small"></span>
      </div>
      <div class="canvas">
        <svg class="raster" viewBox="719 1127 728 282" width="728" height="282">
          <defs>
            <linearGradient id="base"><stop offset="0" stop-color="#cc3f73"/><stop offset=".35" stop-color="#d4446f"/><stop offset=".55" stop-color="#dd4b6b"/><stop offset=".78" stop-color="#cf4070"/><stop offset="1" stop-color="#c93c73"/></linearGradient>
            <radialGradient id="warm"><stop offset="0" stop-color="#f1605f" stop-opacity=".9"/><stop offset="1" stop-color="#e65164" stop-opacity="0"/></radialGradient>
            <radialGradient id="wide"><stop offset="0" stop-color="#7b2382"/><stop offset=".5" stop-color="#8f2a80" stop-opacity=".7"/><stop offset="1" stop-color="#b63679" stop-opacity="0"/></radialGradient>
            <radialGradient id="dark"><stop offset="0" stop-color="#000004"/><stop offset=".16" stop-color="#110b30"/><stop offset=".36" stop-color="#34106a"/><stop offset=".62" stop-color="#6d1d80" stop-opacity=".65"/><stop offset="1" stop-color="#9c2e7f" stop-opacity="0"/></radialGradient>
            <radialGradient id="purp"><stop offset="0" stop-color="#6a1c80"/><stop offset=".5" stop-color="#8c2981" stop-opacity=".55"/><stop offset="1" stop-color="#b63679" stop-opacity="0"/></radialGradient>
            <radialGradient id="lite"><stop offset="0" stop-color="#fef2bd"/><stop offset=".28" stop-color="#fecb8f"/><stop offset=".55" stop-color="#fb8b61" stop-opacity=".7"/><stop offset="1" stop-color="#f1605f" stop-opacity="0"/></radialGradient>
            <radialGradient id="oran"><stop offset="0" stop-color="#feab78"/><stop offset=".4" stop-color="#f98a60" stop-opacity=".7"/><stop offset="1" stop-color="#f1605f" stop-opacity="0"/></radialGradient>
          </defs>
          <rect x="719" y="1127" width="728" height="282" fill="url(#base)"/>
          <circle cx="1060" cy="1250" r="160" fill="url(#warm)"/>
          <circle cx="1000" cy="1170" r="100" fill="url(#warm)"/>
          <circle cx="720" cy="1425" r="120" fill="url(#wide)"/>
          <circle cx="1275" cy="1345" r="115" fill="url(#wide)"/>
          <circle cx="1330" cy="1290" r="70" fill="url(#wide)" opacity=".4"/>
          <circle cx="939" cy="1150" r="46" fill="url(#purp)"/>
          <circle cx="915" cy="1200" r="65" fill="url(#wide)" opacity=".45"/>
          <circle cx="1123" cy="1174" r="34" fill="url(#purp)"/>
          <circle cx="931" cy="1234" r="24" fill="url(#purp)"/>
          <circle cx="1049" cy="1231" r="20" fill="url(#purp)" opacity=".5"/>
          <circle cx="801" cy="1407" r="28" fill="url(#purp)"/>
          <circle cx="974" cy="1195" r="44" fill="url(#dark)"/>
          <circle cx="1167" cy="1302" r="44" fill="url(#dark)"/>
          <circle cx="1275" cy="1345" r="56" fill="url(#dark)"/>
          <circle cx="875" cy="1352" r="44" fill="url(#dark)"/>
          <circle cx="1077" cy="1142" r="42" fill="url(#lite)"/>
          <circle cx="1107" cy="1248" r="40" fill="url(#lite)"/>
          <circle cx="1170" cy="1246" r="46" fill="url(#lite)"/>
          <circle cx="1131" cy="1384" r="44" fill="url(#oran)"/>
          <circle cx="989" cy="1146" r="32" fill="url(#oran)"/>
          <circle cx="852" cy="1271" r="34" fill="url(#oran)"/>
          <circle cx="1018" cy="1273" r="32" fill="url(#oran)"/>
          <circle cx="961" cy="1285" r="36" fill="url(#oran)"/>
          <circle cx="902" cy="1309" r="34" fill="url(#oran)"/>
          <circle cx="920" cy="1383" r="34" fill="url(#oran)"/>
          <circle cx="870" cy="1412" r="28" fill="url(#oran)"/>
          <g class="stations">
            <circle cx="939" cy="1152" r="3"/><circle cx="989" cy="1146" r="3"/><circle cx="1077" cy="1142" r="3"/><circle cx="1123" cy="1174" r="3"/><circle cx="1034" cy="1183" r="3"/><circle cx="974" cy="1195" r="3"/><circle cx="931" cy="1234" r="3"/><circle cx="1049" cy="1231" r="3"/><circle cx="1107" cy="1248" r="3"/><circle cx="1170" cy="1246" r="3"/><circle cx="852" cy="1271" r="3"/><circle cx="1018" cy="1273" r="3"/><circle cx="961" cy="1285" r="3"/><circle cx="1065" cy="1291" r="3"/><circle cx="1167" cy="1302" r="3"/><circle cx="902" cy="1309" r="3"/><circle cx="826" cy="1317" r="3"/><circle cx="1119" cy="1319" r="3"/><circle cx="1275" cy="1345" r="3"/><circle cx="980" cy="1341" r="3"/><circle cx="1074" cy="1351" r="3"/><circle cx="875" cy="1352" r="3"/><circle cx="790" cy="1355" r="3"/><circle cx="1188" cy="1358" r="3"/><circle cx="920" cy="1383" r="3"/><circle cx="1001" cy="1387" r="3"/><circle cx="1131" cy="1384" r="3"/><circle cx="1234" cy="1388" r="3"/><circle cx="1069" cy="1403" r="3"/><circle cx="801" cy="1407" r="3"/>
          </g>
        </svg>
      </div>
    </section>

    <section class="styling">
      <div class="dock-title"><span>Layergestaltung</span><span class="dock-btns"><i class="db-float"></i><i class="db-close"></i></span></div>
      <div class="combo layer-combo"><svg class="mini"><use href="#ras"/></svg>wettersationen_7</div>
      <div class="style-body">
        <nav class="nav">
          <span class="nav-item cur"><svg><use href="#brush"/></svg></span>
          <span class="nav-item"><svg><use href="#netw"/></svg></span>
          <span class="nav-item"><svg><use href="#histo"/></svg></span>
          <span class="nav-item"><svg><use href="#tree"/></svg></span>
          <span class="nav-item"><svg><use href="#undored"/></svg></span>
        </nav>
        <div class="page">
          <div class="combo renderer"><svg class="mini"><use href="#ramp"/></svg>Einkanalpseudofarbe</div>

          <div class="f kanal"><label class="w102">Kanal</label><div class="combo grow">Kanal 1</div></div>
          <div class="f minrow"><label class="w102">Min</label><span class="field minf"><span class="val">0,38331261</span></span><label class="maxl">Max</label><span class="field maxf"><span class="val right">9921159999999993</span></span></div>
          <div class="minmax"><i class="tri"></i><b>Min/Max-Werteinstellungen</b></div>

          <div class="inner">
            <div class="f interp"><label class="w171">Interpolation</label><div class="combo grow">Linear</div></div>
            <div class="f ramp-row"><label class="w171">Farbverlauf</label><div class="ramp"><i></i></div><span class="ramp-drop"></span></div>
            <div class="f suffix"><label class="w171">Beschriftungseinheitssuffix</label><span class="field grow"></span></div>
            <div class="f genau"><label class="w171">Beschriftungsgenauigkeit</label><span class="field grow"><span class="val">4</span><i class="clr"></i><i class="spin"></i></span></div>

            <div class="classes">
              <div class="cls-head"><span class="h1">Wert</span><span class="h2">Farbe</span><span class="h3">Beschriftung</span><span class="h4"></span></div>
              <div class="cls-body">
                <div class="cls-rows">
                  <div class="cls"><span class="v">0,001179...</span><i class="sw s1"></i><span class="l">0,0012</span></div>
                  <div class="cls"><span class="v">1,045748...</span><i class="sw s2"></i><span class="l">1,0457</span></div>
                  <div class="cls"><span class="v">2,090323...</span><i class="sw s3"></i><span class="l">2,0903</span></div>
                  <div class="cls"><span class="v">3,134892...</span><i class="sw s4"></i><span class="l">3,1349</span></div>
                  <div class="cls"><span class="v">4,179466...</span><i class="sw s5"></i><span class="l">4,1795</span></div>
                  <div class="cls"><span class="v">5,224035...</span><i class="sw s6"></i><span class="l">5,2240</span></div>
                  <div class="cls"><span class="v"></span><i class="sw s7"></i><span class="l"></span></div>
                </div>
                <div class="vscroll"><i class="vdown"></i></div>
              </div>
            </div>

            <div class="f modus"><label class="modl">Modus</label><div class="combo modc">Fortlaufend</div><label class="kl">Klassen</label><span class="field klf dis"><span class="val">52</span><i class="spin"></i></span></div>
            <div class="f btns"><span class="btn kbtn">Klassifizieren</span><span class="btn ib"><svg><use href="#plus"/></svg></span><span class="btn ib"><svg><use href="#minus"/></svg></span><span class="btn ib"><svg><use href="#grcy"/></svg></span><span class="btn ib"><svg><use href="#folder"/></svg></span><span class="btn ib"><svg><use href="#saveg"/></svg></span></div>
            <div class="f chk werte"><i class="cb"></i><span>Werte auf Bereich beschränken</span></div>
          </div>

          <h4 class="sec first">Layerdarstellung</h4>
          <div class="grpbox gb1">
            <div class="f h24"><label class="w83">Mischmodus</label><div class="combo grow">Normal</div></div>
            <div class="f h22 m7"><label class="w83">Helligkeit</label><div class="slider"><i class="pos50"></i></div><span class="field sp"><span class="val">0</span><i class="spin"></i></span></div>
            <div class="f h22 m8"><label class="w83">Sättigung</label><div class="slider"><i class="pos50"></i></div><span class="field sp"><span class="val">0</span><i class="spin"></i></span></div>
            <div class="f h22 m8"><label class="w83">Kontrast</label><div class="slider"><i class="pos50"></i></div><span class="field sp"><span class="val">0</span><i class="spin"></i></span></div>
            <div class="f h22 m8"><label class="w83">Gamma</label><div class="slider"><i class="pos11"></i></div><span class="field sp"><span class="val">1,00</span><i class="spin"></i></span></div>
            <div class="f h23 m7"><label class="w83">Graustufen</label><div class="combo grow">Aus</div></div>
            <div class="f farbton">
              <label class="w83 hue-label">Farbton</label>
              <div class="hue">
                <div class="f h27"><i class="cb"></i><span class="hue-l">Einfärben</span><div class="huesw"><i></i></div><span class="ramp-drop hued"></span></div>
                <div class="f h22 m7"><label class="st">Stärke</label><div class="slider short"><i class="pos100"></i></div><span class="field sp2 dis"><span class="val">100%</span><i class="spin"></i></span></div>
                <span class="btn reset"><svg><use href="#undo"/></svg>Zurücksetzen</span>
              </div>
            </div>
          </div>

          <h4 class="sec">Abtastung</h4>
          <div class="grpbox gb2">
            <div class="f h24"><label class="w224">Hinein gezoomt</label><div class="combo grow">Nächster Nachbar</div></div>
            <div class="f h24 m6"><label class="w224">Heraus gezoomt</label><div class="combo grow">Nächster Nachbar</div></div>
            <div class="f h22 m7"><label class="w224">Überabtastung</label><span class="field grow"><span class="val">2,00</span><i class="clr"></i><i class="spin"></i></span></div>
            <div class="f chk fruehe"><i class="cb"></i><span>Frühe Abtastung</span></div>
          </div>

          <div class="apply-bar">
            <span class="btn sq"><svg><use href="#undo"/></svg></span>
            <span class="btn sq"><svg><use href="#redo"/></svg></span>
            <span class="live"><i class="cb on"></i>Laufende Aktualisierung</span>
            <span class="btn apply">Apply</span>
          </div>
        </div>
      </div>
    </section>
  </main>

  <footer class="status">
    <span class="field search"><svg class="lens" viewBox="0 0 14 14"><circle cx="6" cy="6" r="4" fill="none" stroke="#777" stroke-width="1.300"/><path d="M9 9l3.500 3.500" stroke="#777" stroke-width="1.300"/></svg><span class="val">interpolation</span><i class="clr"></i></span>
    <span class="status-right">
      <span class="st-l">Koordinate</span>
      <span class="field coord"><span class="val">330187,5701036</span></span>
      <svg class="plugm"><use href="#plugmini"/></svg>
      <span class="st-l scale-l">Maßstab</span>
      <span class="field scale"><span class="val">1:281311</span><i class="dropbtn"></i></span>
      <svg class="locki"><use href="#lock"/></svg>
      <span class="st-l">Vergrößerung</span>
      <span class="field mag"><span class="val">100%</span><i class="spin"></i></span>
      <span class="st-l dreh">Drehung</span>
      <span class="field mag"><span class="val">0,0 °</span><i class="spin"></i></span>
      <i class="cb on stc"></i><span class="st-l">Zeichnen</span>
      <svg class="glob"><use href="#greyglobe"/></svg>
      <span class="st-l epsg">EPSG:25833</span>
      <svg class="msg"><use href="#msg"/></svg>
    </span>
  </footer>
</body>
</html>
```

FILE: styles.css
```css
* {
  box-sizing: border-box;
}

html, body {
  margin: 0;
  width: 2560px;
  height: 1440px;
  overflow: hidden;
}

body {
  display: flex;
  flex-direction: column;
  background-color: #ececec;
  color: #1c1c1c;
  font-family: "DejaVu Sans", sans-serif;
  font-size: 12px;
}

i, b {
  font-style: normal;
  display: block;
}

.defs {
  display: none;
}

/* mac menu bar */
.menubar {
  height: 25px;
  flex: none;
  display: flex;
  align-items: center;
  padding: 0 0 1px 21px;
  background-color: #fddcbc;
  border-bottom: 1px solid #8a7564;
  font-family: Inter, sans-serif;
  font-size: 13px;
  color: #222;
}

.apple {
  width: 14px;
  height: 16px;
  margin-right: 23px;
}

.menu {
  margin-right: 19.800px;
}

.menu.app {
  font-weight: 700;
}

.menu-right {
  margin-left: auto;
  display: flex;
  align-items: center;
  padding-right: 14px;
}

.dot {
  width: 4px;
  height: 4px;
  border-radius: 50%;
  background-color: #222;
  margin-right: 24px;
}

.ctrl {
  width: 14px;
  height: 18px;
  margin-right: 23px;
}

.clock {
  letter-spacing: 0.200px;
}

.titlebar {
  height: 28px;
  flex: none;
  display: flex;
  align-items: center;
  padding-left: 8px;
  background-color: #fcf6f1;
  border-bottom: 2px solid #cfcfcf;
  border-radius: 10px 10px 0 0;
  position: relative;
}

.light {
  width: 12px;
  height: 12px;
  border-radius: 50%;
  margin-right: 8px;
}

.red { background-color: #fb5f57; }
.amber { background-color: #fdbc2e; }
.green { background-color: #28c840; }

.title {
  position: absolute;
  left: 0;
  right: 0;
  text-align: center;
  font-family: Inter, sans-serif;
  font-size: 13px;
  font-weight: 600;
  color: #444;
  padding-right: 2px;
}

/* tool bars */
.toolbar {
  height: 38.500px;
  flex: none;
  display: flex;
  align-items: center;
  background: linear-gradient(#f7f7f7, #ebebeb);
  border-bottom: 2px solid #c6c6c6;
}

.toolbar + .toolbar {
  padding-top: 1px;
}

.grip {
  width: 9px;
  height: 20px;
  margin: 0 3px;
  flex: none;
  background-image: radial-gradient(#aaa 0.8px, transparent 1px);
  background-size: 3px 3px;
}

.toolbar .grip:first-child {
  margin: 0 2px;
}

.grip.wide {
  margin: 0 5px 0 6px;
}

.tb {
  width: 33px;
  height: 31px;
  flex: none;
  display: flex;
  align-items: center;
  justify-content: center;
  border: 1px solid transparent;
  border-radius: 3px;
}

.tb svg {
  width: 27px;
  height: 27px;
}

.tb.on {
  background-color: #d4d4d4;
  border-color: #aaa;
}

.tb.ring {
  background-color: #fafafa;
  border-color: #aaa;
}

.tb.off svg,
.lt.off svg {
  opacity: 0.32;
  filter: grayscale(1);
}

.arr {
  width: 8px;
  height: 5px;
  margin: 0 2px;
  flex: none;
  background-color: #555;
  clip-path: polygon(0 0, 100% 0, 50% 100%);
}

.sep {
  width: 1px;
  height: 26px;
  margin: 0 3px;
  background-color: #c9c9c9;
  flex: none;
}

/* workspace */
.workspace {
  flex: 1;
  min-height: 0;
  display: flex;
  background-color: #ececec;
}

.dock-title {
  height: 23px;
  display: flex;
  align-items: center;
  justify-content: space-between;
  padding: 1px 3px 0 4px;
  font-size: 11px;
  color: #333;
}

.dock-btns {
  display: flex;
  gap: 3px;
}

.dock-btns i {
  width: 11px;
  height: 11px;
  border: 1px solid #666;
  border-radius: 2px;
  background-color: #eee;
}

.db-float {
  box-shadow: inset 2px -2px 0 -1px #777;
}

.db-close {
  background: linear-gradient(45deg, transparent 44%, #444 45%, #444 55%, transparent 56%),
              linear-gradient(-45deg, transparent 44%, #444 45%, #444 55%, transparent 56%);
}

/* layer panel */
.layers {
  width: 372px;
  flex: none;
  display: flex;
  flex-direction: column;
  padding-right: 2px;
}

.layers .dock-title {
  padding-right: 1px;
}

.layer-tools {
  height: 29px;
  flex: none;
  display: flex;
  align-items: center;
  padding: 0 0 4px 4px;
}

.lt {
  width: 24px;
  height: 23px;
  margin-right: 1px;
  display: flex;
  align-items: center;
  justify-content: center;
  border: 1px solid transparent;
  border-radius: 3px;
}

.lt svg {
  width: 19px;
  height: 19px;
}

.lt.on {
  background-color: #d4d4d4;
  border-color: #aaa;
}

.tree {
  flex: 1;
  margin-left: 1px;
  background-color: #fff;
  border: 1px solid #b8b8b8;
  border-bottom: none;
  border-left: none;
}

.row {
  height: 18px;
  display: flex;
  align-items: center;
  padding-right: 5px;
  font-family: "Open Sans", sans-serif;
  font-size: 13px;
}

.row.sel {
  background-color: #dcdcdc;
}

.tw {
  width: 23px;
  height: 8px;
  flex: none;
  padding-left: 7px;
}

.tw.c::before {
  content: "";
  display: block;
  width: 5px;
  height: 8px;
  background-color: #555;
  clip-path: polygon(0 0, 100% 50%, 0 100%);
}

.cb {
  width: 14px;
  height: 14px;
  flex: none;
  background-color: #fff;
  border: 1px solid #bdbdbd;
  border-radius: 2px;
  position: relative;
}

.cb.on::after {
  content: "";
  position: absolute;
  left: 4px;
  top: 0;
  width: 4px;
  height: 10px;
  border-right: 1.500px solid #222;
  border-bottom: 1.500px solid #222;
  transform: rotate(30deg) skewX(-8deg);
}

.sym {
  width: 16px;
  height: 16px;
  flex: none;
  margin-left: 7px;
  display: flex;
  align-items: center;
  justify-content: center;
}

.grp {
  width: 14px;
  height: 14px;
  flex: none;
  margin-left: 2px;
}

.nm {
  flex: 1;
  margin-left: 6px;
  font-size: 13.500px;
  letter-spacing: 0.450px;
  font-weight: 600;
  font-style: italic;
  color: #858585;
  white-space: nowrap;
}

.nm.strong {
  font-size: 13px;
  letter-spacing: 0.100px;
  font-weight: 700;
  font-style: normal;
  color: #222;
}

.nm.cur {
  color: #000;
  text-decoration: underline;
}

.row .grp + .nm {
  margin-left: 7px;
}

.ind {
  width: 16px;
  height: 16px;
  flex: none;
  background-color: #fff;
  outline: 1px solid #e3e3e3;
}

.pt {
  width: 6px;
  height: 6px;
  border-radius: 50%;
  border: 1px solid #888;
}

.pt-a { background-color: #c0394c; border-color: #d99; }
.pt-b { background-color: #d0582a; border-color: #dca; }
.pt-c { background-color: #b02a2a; border-color: #d99; }
.pt-d { background-color: #e79ab0; border-color: #844; }
.pt-e { background-color: #e88a1e; border-color: #754; }

.ln {
  width: 16px;
  height: 1px;
}

.ln-a { background-color: #e4bcbc; }
.ln-b { background-color: #f6cfc6; }

.fill {
  width: 16px;
  height: 16px;
  border: 1px solid #777;
}

.f-none { background-color: #fff; border-color: #aaa; }
.f-gold { background-color: #d5b338; }
.f-sage { background-color: #6e9a6e; }
.f-green { background-color: #56a300; }
.f-pink { background-color: #f5a3b4; }
.f-plum { background-color: #9c1560; }
.f-leaf { background-color: #1a901a; }
.f-slate { background-color: #7a858c; }

/* temporal controller + canvas */
.center {
  width: 1658px;
  flex: none;
  display: flex;
  flex-direction: column;
  padding-left: 3px;
  padding-right: 6px;
}

.time-title {
  padding-left: 5px;
}

.time-row {
  height: 29px;
  flex: none;
  display: flex;
  align-items: flex-start;
  gap: 3px;
  margin-top: -1px;
  position: relative;
}

.tc {
  width: 23px;
  height: 23px;
  display: flex;
  align-items: center;
  justify-content: center;
  border: 1px solid #bbb;
  border-radius: 3px;
  background-color: #f3f3f3;
}

.tc.on {
  background-color: #d4d4d4;
}

.tc svg {
  width: 19px;
  height: 19px;
}

.time-text {
  line-height: 23px;
  font-size: 12px;
}

.time-gear {
  width: 16px;
  height: 16px;
  margin-left: auto;
  margin-right: 4px;
  margin-top: 2px;
}

.range-row {
  height: 24px;
  flex: none;
  display: flex;
  align-items: center;
  gap: 3px;
}

.range {
  width: 511px;
  height: 22px;
}

.range.two {
  width: 513px;
}

.range-sync {
  width: 18px;
  height: 18px;
  margin-left: 6px;
}

.canvas {
  flex: 1;
  margin-top: 86px;
  background-color: #fff;
  border: 1px solid #bdbdbd;
  border-bottom: none;
  position: relative;
  overflow: hidden;
}

.raster {
  position: absolute;
  left: 343px;
  top: 758px;
}

.stations circle {
  fill: #d9ad26;
  stroke: #2f2f2f;
  stroke-width: 1;
}

/* fields */
.field {
  display: flex;
  align-items: center;
  height: 22px;
  background-color: #fff;
  border: 1px solid #b6b6b6;
  border-radius: 3px;
  overflow: hidden;
  flex: none;
}

.field.dis {
  color: #bbb;
  background-color: #f7f7f7;
}

.val {
  flex: 1;
  padding-left: 4px;
  white-space: nowrap;
  overflow: hidden;
}

.val.right {
  text-align: right;
  padding-right: 4px;
  direction: rtl;
}

.spin {
  width: 14px;
  height: 100%;
  flex: none;
  border-left: 1px solid #ccc;
  background-color: #f5f5f5;
  position: relative;
}

.spin::before,
.spin::after {
  content: "";
  position: absolute;
  left: 3px;
  border-left: 4px solid transparent;
  border-right: 4px solid transparent;
}

.spin::before {
  top: 4px;
  border-bottom: 4px solid #555;
}

.spin::after {
  bottom: 4px;
  border-top: 4px solid #555;
}

.spin.faint {
  opacity: 0.55;
}

.clr {
  width: 14px;
  height: 10px;
  margin-right: 5px;
  flex: none;
  background-color: #9a9a9a;
  clip-path: polygon(0 50%, 30% 0, 100% 0, 100% 100%, 30% 100%);
}

.combo {
  height: 23px;
  display: flex;
  align-items: center;
  padding: 0 20px 0 5px;
  background: linear-gradient(#fcfcfc, #f1f1f1);
  border: 1px solid #b6b6b6;
  border-radius: 3px;
  white-space: nowrap;
  position: relative;
}

.combo::after {
  content: "";
  position: absolute;
  right: 7px;
  top: 50%;
  margin-top: -2px;
  border-left: 4px solid transparent;
  border-right: 4px solid transparent;
  border-top: 4px solid #444;
}

.grow {
  flex: 1;
  min-width: 0;
}

.mini {
  width: 12px;
  height: 12px;
  margin-right: 5px;
}

.btn {
  display: flex;
  align-items: center;
  justify-content: center;
  background-color: #f3f3f3;
  border: 1px solid #bbb;
  border-radius: 3px;
  flex: none;
}

/* styling dock */
.styling {
  flex: 1;
  min-width: 0;
  display: flex;
  flex-direction: column;
}

.styling .dock-title {
  padding-right: 2px;
}

.layer-combo {
  height: 23px;
  margin: 2px 3px 0 3px;
  flex: none;
  padding-left: 7px;
}

.style-body {
  flex: 1;
  min-height: 0;
  display: flex;
  margin-top: 6px;
}

.nav {
  width: 38px;
  margin-left: 3px;
  flex: none;
  display: flex;
  flex-direction: column;
  background-color: #5f5f5f;
  margin-bottom: 2px;
}

.nav-item {
  height: 32px;
  display: flex;
  align-items: center;
  justify-content: center;
  padding-right: 4px;
}

.nav-item.cur {
  background-color: #3d3d3d;
}

.nav-item svg {
  width: 23px;
  height: 23px;
}

.page {
  flex: 1;
  min-width: 0;
  display: flex;
  flex-direction: column;
  padding: 9px 12px 2px 13px;
}

.renderer {
  flex: none;
}

.f {
  display: flex;
  align-items: center;
  flex: none;
}

.f label {
  flex: none;
  white-space: nowrap;
}

.kanal {
  margin-top: 10px;
  padding: 0 3px 0 2px;
  height: 23px;
}

.w102 { width: 102px; }
.w171 { width: 171px; }
.w83 { width: 82px; }
.w224 { width: 223px; }

.minrow {
  margin-top: 7px;
  padding: 0 3px 0 2px;
  height: 23px;
}

.minf {
  width: 124px;
  height: 23px;
}

.maxl {
  margin-left: 7px;
  width: 101px;
}

.maxf {
  width: 125px;
  height: 23px;
}

.minmax {
  height: 20px;
  margin-top: 6px;
  display: flex;
  align-items: center;
  padding-left: 6px;
  flex: none;
}

.tri {
  width: 0;
  height: 0;
  border-left: 7px solid #333;
  border-top: 5px solid transparent;
  border-bottom: 5px solid transparent;
  margin-right: 11px;
}

.inner {
  padding: 0 6px 0 5px;
  flex: none;
  display: flex;
  flex-direction: column;
}

.interp {
  margin-top: 13px;
  height: 23px;
}

.ramp-row {
  margin-top: 6px;
  height: 27px;
}

.ramp {
  flex: 1;
  height: 27px;
  padding: 5px 4px;
  background-color: #f1f1f1;
  border: 1px solid #b6b6b6;
  border-radius: 3px 0 0 3px;
}

.ramp i {
  height: 100%;
  background: linear-gradient(to right, #000004, #1d1147 15%, #51127c 28%, #822681 42%, #b63679 55%, #e65164 68%, #fb8761 82%, #fec287 92%, #fcf4bb);
}

.ramp-drop {
  width: 12px;
  height: 27px;
  flex: none;
  background-color: #f1f1f1;
  border: 1px solid #b6b6b6;
  border-left: none;
  border-radius: 0 3px 3px 0;
  position: relative;
}

.ramp-drop::after {
  content: "";
  position: absolute;
  left: 1px;
  top: 11px;
  border-left: 4px solid transparent;
  border-right: 4px solid transparent;
  border-top: 4px solid #444;
}

.suffix {
  margin-top: 8px;
}

.suffix .field,
.genau .field {
  height: 22px;
}

.genau {
  margin-top: 9px;
}

.classes {
  margin-top: 7px;
  height: 250px;
  flex: none;
  display: flex;
  flex-direction: column;
  background-color: #fff;
  border: 1px solid #b6b6b6;
  overflow: hidden;
}

.cls-head {
  height: 17px;
  flex: none;
  display: flex;
  align-items: center;
  background-color: #f4f4f4;
  border-bottom: 1px solid #c2c2c2;
  font-size: 10px;
  color: #444;
}

.cls-head span {
  height: 100%;
  display: flex;
  align-items: center;
  padding-left: 2px;
  border-right: 1px solid #cfcfcf;
}

.h1 { width: 100px; }
.h2 { width: 59px; }
.h3 { width: 279px; }
.h4 { flex: 1; border-right: none !important; }

.cls-body {
  flex: 1;
  min-height: 0;
  display: flex;
}

.cls-rows {
  flex: 1;
  min-width: 0;
  overflow: hidden;
}

.cls {
  height: 38px;
  display: flex;
  align-items: center;
}

.v {
  width: 111px;
  padding-left: 23px;
  white-space: nowrap;
  color: #111;
}

.sw {
  width: 36px;
  height: 36px;
  border-radius: 5px;
  flex: none;
}

.s1 { background-color: #000004; }
.s2 { background-color: #02020f; }
.s3 { background-color: #050416; }
.s4 { background-color: #0a0722; }
.s5 { background-color: #100b2f; }
.s6 { background-color: #140e36; }
.s7 { background-color: #19103f; }

.l {
  margin-left: 15px;
  color: #aaa;
}

.vscroll {
  width: 14px;
  flex: none;
  background-color: #ddd;
  border-left: 1px solid #ccc;
  position: relative;
  margin-top: -17px;
  background-image: linear-gradient(#f7f7f7 72px, transparent 72px);
}

.vscroll::before {
  content: "";
  position: absolute;
  left: 3px;
  top: 5px;
  border-left: 4px solid transparent;
  border-right: 4px solid transparent;
  border-bottom: 4px solid #555;
}

.vdown {
  position: absolute;
  left: 0;
  right: 0;
  bottom: 0;
  height: 14px;
  background-color: #f4f4f4;
}

.vdown::after {
  content: "";
  position: absolute;
  left: 3px;
  top: 5px;
  border-left: 4px solid transparent;
  border-right: 4px solid transparent;
  border-top: 4px solid #555;
}

.modus {
  margin-top: 7px;
  height: 22px;
}

.modl {
  width: 47px;
}

.modc {
  width: 131px;
  height: 23px;
}

.kl {
  margin-left: auto;
  margin-right: 7px;
}

.klf {
  width: 70px;
}

.btns {
  margin-top: 10px;
  gap: 6px;
  height: 24px;
}

.kbtn {
  width: 88px;
  height: 24px;
  font-size: 12px;
}

.ib {
  width: 28px;
  height: 24px;
}

.ib svg {
  width: 18px;
  height: 18px;
}

.chk {
  height: 14px;
  gap: 5px;
  color: #333;
}

.werte {
  margin-top: 13px;
}

.sec {
  margin: 8px 0 3px;
  height: 16px;
  flex: none;
  font-size: 12px;
  font-weight: 700;
  line-height: 16px;
  padding-left: 1px;
}

.sec.first {
  margin-top: 17px;
}

.grpbox {
  flex: none;
  padding: 10px 12px 0 11px;
  border: 1px solid #dcdcdc;
  border-radius: 2px;
  background-color: #e9e9e9;
}

.gb1 {
  height: 289px;
}

.gb2 {
  height: 134px;
}

.h22 { height: 22px; }
.h23 { height: 23px; }
.h24 { height: 24px; }
.h27 { height: 27px; }
.m6 { margin-top: 6px; }
.m7 { margin-top: 7px; }
.m8 { margin-top: 8px; }

.slider {
  width: 257px;
  height: 6px;
  margin-right: 8px;
  flex: none;
  border-radius: 3px;
  background-color: #d0d0d0;
  border: 1px solid #bcbcbc;
  position: relative;
}

.slider i {
  position: absolute;
  left: 0;
  top: -1px;
  height: 6px;
  border-radius: 3px;
  background-color: #4a8fdc;
  border: 1px solid #3873b8;
}

.slider i::after {
  content: "";
  position: absolute;
  right: -6px;
  top: -5px;
  width: 13px;
  height: 14px;
  border-radius: 3px;
  background-color: #fafafa;
  border: 1px solid #bbb;
}

.pos50 { width: 129px; }
.pos11 { width: 28px; }
.pos100 { width: 100%; }

.sp {
  width: 93px;
}

.farbton {
  margin-top: 7px;
  align-items: flex-start;
}

.hue-label {
  padding-top: 21px;
}

.hue {
  flex: 1;
  min-width: 0;
}

.hue-l {
  margin-left: 6px;
  color: #333;
}

.huesw {
  margin-left: auto;
  width: 88px;
  height: 27px;
  padding: 5px 4px;
  border: 1px solid #c8c8c8;
  border-radius: 3px 0 0 3px;
  background-color: #f0f0f0;
}

.huesw i {
  height: 100%;
  border-radius: 2px;
  background-color: #e8e3e3;
}

.st {
  width: 130px;
}

.slider.short {
  width: 147px;
  margin-right: 9px;
}

.sp2 {
  width: 72px;
}

.reset {
  width: 101px;
  height: 22px;
  margin-top: 7px;
  font-size: 10px;
  color: #333;
  gap: 4px;
}

.reset svg {
  width: 13px;
  height: 13px;
}

.fruehe {
  margin-top: 11px;
}

.apply-bar {
  margin-top: auto;
  height: 23px;
  flex: none;
  display: flex;
  align-items: center;
  gap: 7px;
  margin-left: -10px;
  margin-right: -9px;
  color: #333;
}

.sq {
  width: 23px;
  height: 23px;
}

.sq svg {
  width: 15px;
  height: 15px;
}

.live {
  margin-left: auto;
  display: flex;
  align-items: center;
  gap: 5px;
  margin-right: 6px;
}

.apply {
  width: 80px;
  height: 23px;
}

/* status bar */
.status {
  height: 31px;
  flex: none;
  display: flex;
  align-items: center;
  padding: 0 6px 0 2px;
  background-color: #ececec;
  color: #333;
  font-size: 10.500px;
}

.search {
  width: 254px;
  height: 22px;
  font-size: 12px;
  color: #111;
}

.lens {
  width: 14px;
  height: 14px;
  margin-left: 6px;
}

.status-right {
  margin-left: auto;
  display: flex;
  align-items: center;
}

.coord {
  width: 110px;
  margin-left: 3px;
}

.coord .val {
  padding-left: 9px;
}

.plugm {
  width: 16px;
  height: 20px;
  margin-left: 7px;
}

.scale-l {
  margin-left: 11px;
}

.scale {
  width: 93px;
  margin: 0 15px 0 3px;
}

.dropbtn {
  width: 19px;
  height: 100%;
  flex: none;
  background-color: #eee;
  border-left: 1px solid #ccc;
  position: relative;
}

.dropbtn::after {
  content: "";
  position: absolute;
  left: 5px;
  top: 8px;
  border-left: 4px solid transparent;
  border-right: 4px solid transparent;
  border-top: 4px solid #555;
}

.locki {
  width: 12px;
  height: 20px;
  margin-right: 9px;
}

.mag {
  width: 91px;
  margin-left: 3px;
  color: #111;
}

.dreh {
  margin-left: 9px;
  margin-right: 5px;
}

.stc {
  margin: 0 5px 0 12px;
}

.glob {
  width: 16px;
  height: 16px;
  margin: 0 2px 0 17px;
}

.msg {
  width: 20px;
  height: 20px;
  margin-left: 17px;
}
```
